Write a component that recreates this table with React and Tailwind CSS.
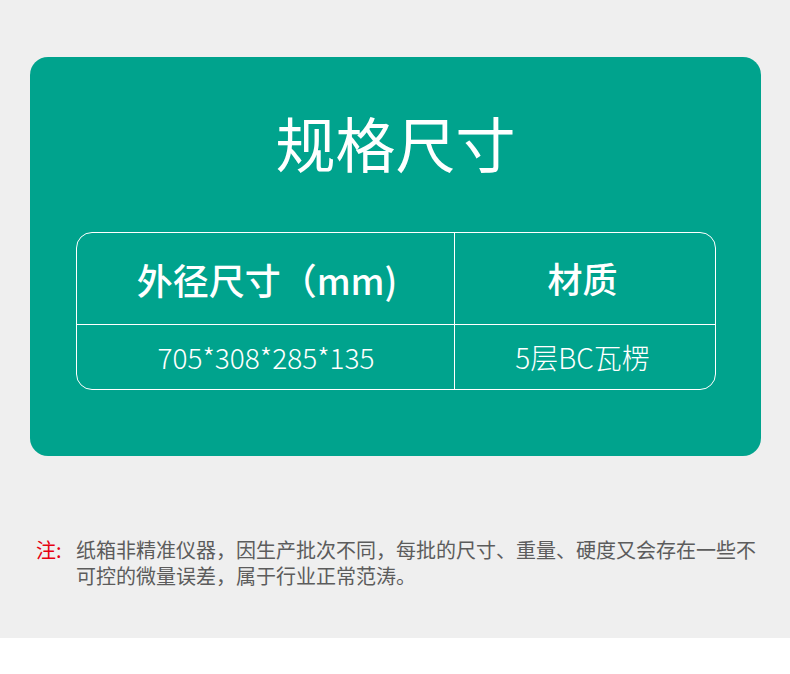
export default function App() {
  const font = { fontFamily: '"Noto Sans CJK SC", "Noto Sans", sans-serif' }
  return (
    <div className="w-[790px] bg-white" style={font}>
      <div className="h-[638px] bg-[#efefef] px-[30px] pt-[57px]">
        {/* Card */}
        <div className="flex h-[399px] w-[731px] flex-col items-center rounded-[18px] bg-[#00a38d] pt-[55px]">
          <h1 className="text-[60px] font-normal leading-none text-white">
            规格尺寸
          </h1>
          <div className="mt-[60px] grid w-[640px] grid-cols-[378px_1fr] grid-rows-[92px_64px] overflow-hidden rounded-[16px] border border-white text-white">
            <div className="flex items-center justify-center border-r border-b border-white pl-[4px] text-[36px] font-medium">
              外径尺寸（mm)
            </div>
            <div className="flex items-center justify-center border-b border-white pr-[4px] text-[35px] font-medium">
              材质
            </div>
            <div className="flex items-center justify-center border-r border-white pl-[2px] text-[28px] font-light">
              705*308*285*135
            </div>
            <div className="flex items-center justify-center pr-[4px] text-[28px] font-light">
              5层BC瓦楞
            </div>
          </div>
        </div>

        {/* Note */}
        <div className="mt-[81px] flex text-[20px] leading-[26px] text-[#5c5c5c]">
          <span className="w-[46px] shrink-0 pl-[6px] text-[#e60012]">注:</span>
          <p className="w-[690px]">
            纸箱非精准仪器，因生产批次不同，每批的尺寸、重量、硬度又会存在一些不可控的微量误差，属于行业正常范涛。
          </p>
        </div>
      </div>
      <div className="h-[36px] bg-white" />
    </div>
  )
}
